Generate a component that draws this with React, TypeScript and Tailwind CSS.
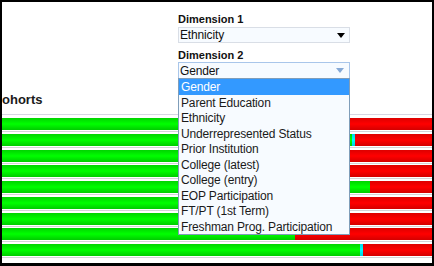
const rows: { g: number; c: number }[] = [
  { g: 345, c: 0 },
  { g: 350, c: 3 },
  { g: 340, c: 0 },
  { g: 330, c: 0 },
  { g: 368, c: 0 },
  { g: 320, c: 0 },
  { g: 335, c: 0 },
  { g: 293, c: 0 },
  { g: 358, c: 3 },
];

const options = [
  "Gender",
  "Parent Education",
  "Ethnicity",
  "Underrepresented Status",
  "Prior Institution",
  "College (latest)",
  "College (entry)",
  "EOP Participation",
  "FT/PT (1st Term)",
  "Freshman Prog. Participation",
];

function Arrow({ color }: { color: string }) {
  return (
    <svg width="8" height="5" viewBox="0 0 8 5" className="block">
      <path d="M0 0 H8 L4 5 Z" fill={color} />
    </svg>
  );
}

export default function App() {
  return (
    <div className="w-[434px] h-[266px] bg-black pt-[2px] pl-[2px]">
      <div className="relative w-[430px] h-[261px] bg-white overflow-hidden font-['Liberation_Sans',Arial,sans-serif] text-[#111]">
        <div className="pl-[176px] pt-[11px]">
          <div className="w-[172px] h-[13px] leading-[13px] text-[11px] font-bold">Dimension 1</div>
          <div className="mt-[1px] w-[172px] h-[16px] border border-[#d9dee6] bg-[#f7fbff] flex items-center justify-between pl-[1px] pr-[4px]">
            <span className="text-[12px] leading-[14px] tracking-[-0.15px]">Ethnicity</span>
            <Arrow color="#000" />
          </div>
          <div className="mt-[6px] w-[172px] h-[13px] leading-[13px] text-[11px] font-bold">Dimension 2</div>
          <div className="relative w-[172px]">
            <div className="h-[17px] border border-[#a9c6ea] bg-[#f7fbff] flex items-center justify-between pl-[1px] pr-[5px]">
              <span className="text-[12px] leading-[14px] tracking-[-0.15px] pt-[1px]">Gender</span>
              <Arrow color="#86a9d6" />
            </div>
            <div className="absolute left-0 top-[16px] z-10 w-[172px] border border-[#7f9db9] bg-[#f7fbff]">
              {options.map((o, i) => (
                <div
                  key={o}
                  className={
                    i === 0
                      ? "h-[15.5px] leading-[15.5px] text-[12px] tracking-[-0.15px] pl-[2px] pt-[1px] bg-[#3399ff] text-white"
                      : "h-[15.5px] leading-[15.5px] text-[12px] tracking-[-0.15px] pl-[2px] pt-[1px] text-[#1a1a1a]"
                  }
                >
                  {o}
                </div>
              ))}
            </div>
          </div>
        </div>
        <div className="mt-[13px] pb-[7px] border-b border-[#d6d6e2]">
          <div className="h-[15px] leading-[15px] text-[13px] font-bold text-[#1a1a1a]">ohorts</div>
        </div>
        <div className="mt-[3px]">
          {rows.map((r, i) => (
            <div key={i} className="h-[15.75px] flex flex-col">
              <div className="h-[12px] flex">
                <div
                  className="h-full bg-gradient-to-b from-[#00d400] via-[#00ff00] to-[#00cc00]"
                  style={{ width: r.g }}
                />
                {r.c > 0 && (
                  <div
                    className="h-full bg-gradient-to-b from-[#00d8e8] via-[#00ffff] to-[#00d0e0]"
                    style={{ width: r.c }}
                  />
                )}
                <div className="h-full flex-1 bg-gradient-to-b from-[#dd0000] via-[#ff0000] to-[#d40000]" />
              </div>
              <div className="mt-[1px] h-[1px] bg-[#d4d4d8]" />
            </div>
          ))}
        </div>
      </div>
    </div>
  );
}
